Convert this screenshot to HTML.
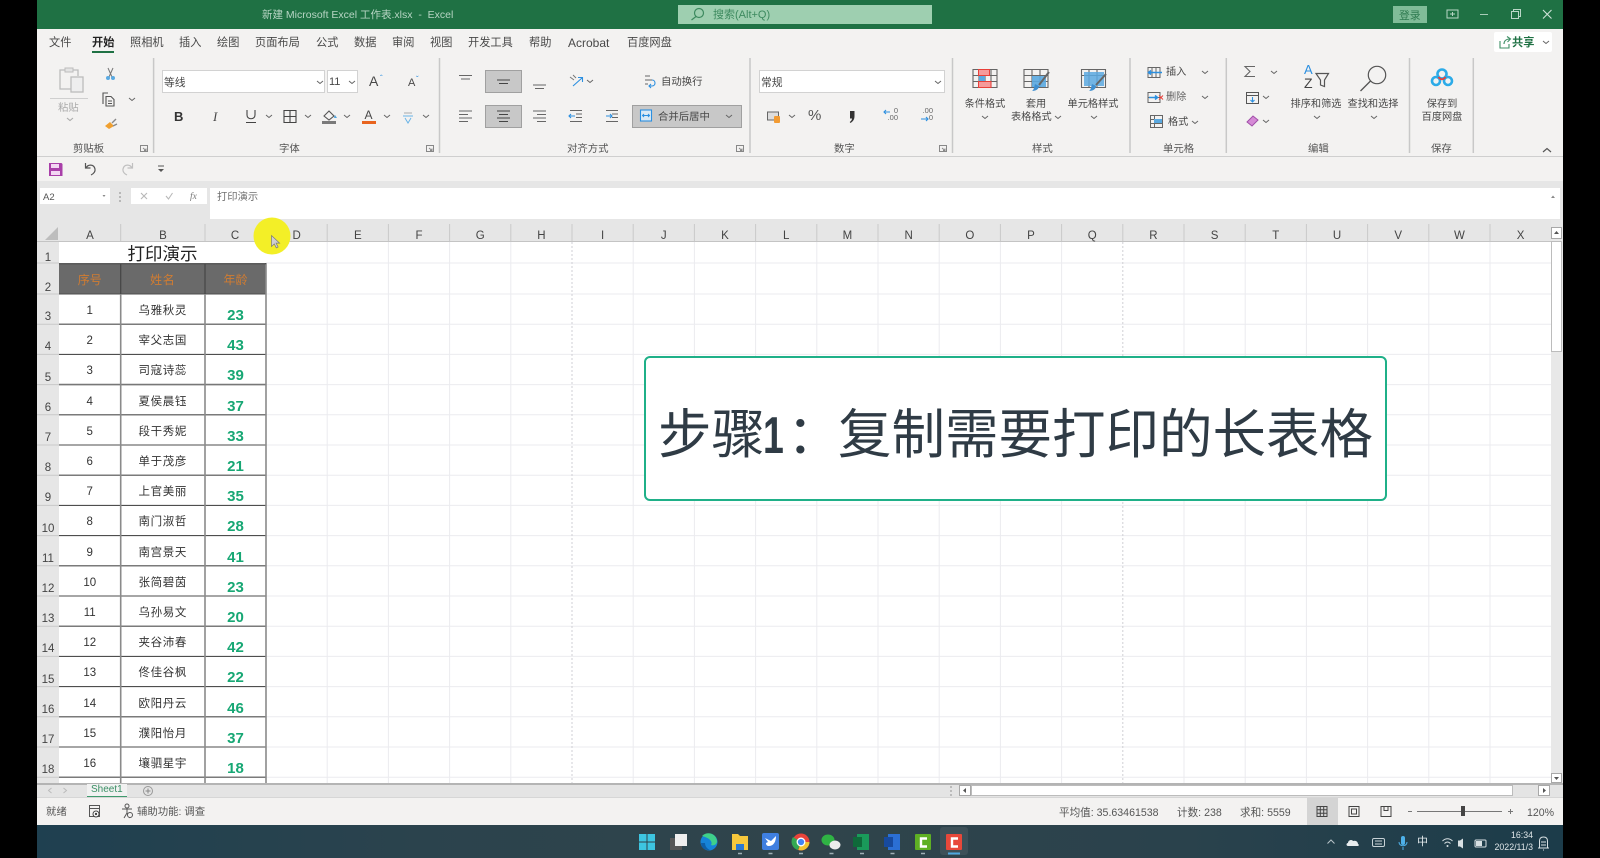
<!DOCTYPE html>
<html lang="zh"><head><meta charset="utf-8"><title>Excel</title>
<style>
html,body{margin:0;padding:0;background:#000;width:1600px;height:858px;overflow:hidden}
body{position:relative;font-family:"Liberation Sans","Noto Sans CJK SC",sans-serif;color:#444;filter:blur(.3px)}
.p{position:absolute}
.t{position:absolute;white-space:nowrap;font-size:11px;line-height:14px;color:#484848}
.c{text-align:center}
.m{font-size:11.2px;top:36px}
.g{font-size:10.4px;top:142.5px;color:#555}
.s{font-size:10.2px}
.h{position:absolute;top:229px;width:30px;text-align:center;font-size:11.5px;line-height:14px;color:#444}
.r{position:absolute;left:37px;width:229px;height:30.2px}
.r span{position:absolute;text-align:center;line-height:16px;white-space:nowrap}
.n{left:0;width:22px;bottom:-1px;font-size:11.5px;color:#444}
.a{left:22px;width:61.5px;top:9px;font-size:11.5px;color:#333}
.b{left:83.5px;width:84.5px;top:9px;font-size:11.5px;color:#333;letter-spacing:.6px}
.d{left:168px;width:61px;top:14px;font-size:15px;font-weight:bold;color:#17a774}
.q{position:absolute;white-space:nowrap;font-size:53.5px;line-height:60px;top:406px;color:#2f3b45}
.o{font-size:12px!important;color:#d07c32!important;top:8px!important}
</style></head><body>

<div class="p" style="left:37px;top:0;width:1526px;height:29px;background:#1f7144"></div>
<div class="p" style="left:37px;top:29px;width:1526px;height:127px;background:#f3f2f1"></div>
<div class="p" style="left:37px;top:156px;width:1526px;height:1.5px;background:#cfcfcf"></div>
<div class="p" style="left:37px;top:157px;width:1526px;height:24px;background:#f3f2f1"></div>
<div class="p" style="left:37px;top:181px;width:1526px;height:39px;background:#e6e6e6"></div>
<div class="p" style="left:37px;top:220px;width:1526px;height:22px;background:#e6e6e6"></div>
<div class="p" style="left:37px;top:242px;width:22px;height:541px;background:#e6e6e6"></div>
<div class="p" style="left:59px;top:242px;width:1492px;height:541px;background:#fff"></div>
<div class="p" style="left:1551px;top:220px;width:12px;height:563px;background:#e8e8e8"></div>
<div class="p" style="left:37px;top:783px;width:1526px;height:15px;background:#e4e4e4"></div>
<div class="p" style="left:37px;top:783px;width:1526px;height:1.5px;background:#b4b4b4"></div>
<div class="p" style="left:37px;top:796.5px;width:1526px;height:1.5px;background:#d6d6d6"></div>
<div class="p" style="left:37px;top:798px;width:1526px;height:27px;background:#f3f2f1"></div>
<div class="p" style="left:37px;top:825px;width:1526px;height:33px;background:linear-gradient(90deg,#1f4050 0%,#2b434d 25%,#30444b 50%,#2a424c 75%,#1c3c4a 100%)"></div>

<!-- boxes -->
<div class="p" style="left:678px;top:5px;width:254px;height:19px;background:#9ecfb0"></div>
<div class="p" style="left:1393px;top:6px;width:34px;height:17px;background:#80bc98"></div>
<div class="p" style="left:92px;top:51px;width:22px;height:2px;background:#1f7144"></div>
<div class="p" style="left:1494px;top:32px;width:58px;height:20px;background:#fff;border-radius:2px"></div>
<div class="p" style="left:162px;top:70px;width:161px;height:21px;background:#fff;border:1px solid #d2d2d2"></div>
<div class="p" style="left:327px;top:70px;width:29px;height:21px;background:#fff;border:1px solid #d2d2d2"></div>
<div class="p" style="left:485px;top:70px;width:35px;height:21px;background:#c8c8c8;border:1px solid #a0a0a0"></div>
<div class="p" style="left:485px;top:105px;width:35px;height:21px;background:#c8c8c8;border:1px solid #a0a0a0"></div>
<div class="p" style="left:632px;top:105px;width:108px;height:21px;background:#c8c8c8;border:1px solid #a0a0a0"></div>
<div class="p" style="left:759px;top:70px;width:184px;height:21px;background:#fff;border:1px solid #d2d2d2"></div>
<div class="p" style="left:40px;top:188px;width:70px;height:16px;background:#fff"></div>
<div class="p" style="left:131px;top:188px;width:76px;height:16px;background:#fff"></div>
<div class="p" style="left:209.5px;top:188px;width:1350px;height:31px;background:#fff"></div>
<div class="p" style="left:59px;top:264px;width:207px;height:30px;background:#6a6a6a"></div>
<div class="p" style="left:87px;top:784px;width:40px;height:13px;background:#f1f1f1;border-bottom:1px solid #3f9a6d;box-sizing:border-box"></div>
<div class="p" style="left:959px;top:785px;width:12px;height:11px;background:#fff;border:1px solid #a8a8a8;box-sizing:border-box"></div>
<div class="p" style="left:971px;top:785px;width:542px;height:11px;background:#fff;border:1px solid #bcbcbc;box-sizing:border-box"></div>
<div class="p" style="left:1538px;top:785px;width:12px;height:11px;background:#fff;border:1px solid #a8a8a8;box-sizing:border-box"></div>
<div class="p" style="left:1551px;top:227px;width:11px;height:12px;background:#fff;border:1px solid #a8a8a8;box-sizing:border-box"></div>
<div class="p" style="left:1551px;top:241px;width:11px;height:111px;background:#fff;border:1px solid #bcbcbc;box-sizing:border-box"></div>
<div class="p" style="left:1551px;top:773px;width:11px;height:10px;background:#fff;border:1px solid #a8a8a8;box-sizing:border-box"></div>
<div class="p" style="left:1307px;top:798px;width:31px;height:27px;background:#d4d4d4"></div>
<div class="p" style="left:940px;top:827px;width:28px;height:28px;background:#3d5058;border-radius:3px"></div>

<svg class="p" style="left:0;top:0" width="1600" height="858" viewBox="0 0 1600 858" fill="none">
<!-- gridlines -->
<path stroke="#ebebef" d="M266 263H1551M266 294H1551M266 324.2H1551M266 354.4H1551M266 384.6H1551M266 414.8H1551M266 445H1551M266 475.2H1551M266 505.4H1551M266 535.6H1551M266 565.8H1551M266 596H1551M266 626.2H1551M266 656.4H1551M266 686.6H1551M266 716.8H1551M266 747H1551M266 777.2H1551"/>
<path stroke="#ebebef" d="M327.2 242V783M388.4 242V783M449.6 242V783M510.8 242V783M633.2 242V783M694.4 242V783M755.6 242V783M816.8 242V783M878 242V783M939.2 242V783M1000.4 242V783M1061.6 242V783M1184 242V783M1245.2 242V783M1306.4 242V783M1367.6 242V783M1428.8 242V783M1490 242V783"/>
<path stroke="#cfcfd4" stroke-dasharray="2 2" d="M572 242V783M1122.8 242V783"/>
<!-- header separators -->
<path stroke="#c9c9c9" d="M120.7 224V242M205 224V242M266 224V242M327.2 224V242M388.4 224V242M449.6 224V242M510.8 224V242M572 224V242M633.2 224V242M694.4 224V242M755.6 224V242M816.8 224V242M878 224V242M939.2 224V242M1000.4 224V242M1061.6 224V242M1122.8 224V242M1184 224V242M1245.2 224V242M1306.4 224V242M1367.6 224V242M1428.8 224V242M1490 224V242"/>
<path stroke="#c9c9c9" d="M37 263H59M37 294H59M37 324.2H59M37 354.4H59M37 384.6H59M37 414.8H59M37 445H59M37 475.2H59M37 505.4H59M37 535.6H59M37 565.8H59M37 596H59M37 626.2H59M37 656.4H59M37 686.6H59M37 716.8H59M37 747H59M37 777.2H59"/>
<path stroke="#c4c4c4" d="M37 241.5H1551"/>
<path fill="#bdbdbd" d="M45 240L58 240L58 227Z"/>
<!-- table -->
<path stroke="#4e4e4e" stroke-width="1.1" d="M59 294H266M59 324.2H266M59 354.4H266M59 414.8H266M59 445H266M59 475.2H266M59 505.4H266M59 535.6H266M59 565.8H266M59 596H266M59 626.2H266M59 656.4H266M59 686.6H266M59 716.8H266M59 747H266M59 777.2H266"/>
<path stroke="#777" stroke-width="1.6" d="M59 384.6H266"/>
<path stroke="#8a8a8a" stroke-width="1.6" d="M120.7 294V783M205 294V783M266 263V783"/>
<path stroke="#454545" stroke-width="1.2" d="M120.7 264V294M205 264V294M59 263.7H266"/>
<!-- ribbon dividers -->
<path stroke="#c8c8c8" stroke-width="1.5" d="M153.6 58V153M439.5 58V153M750 58V153M952.5 58V153M1130 58V153M1226.3 58V153M1409.5 58V153M1473.3 58V153"/>
<!-- chevrons -->
<path stroke="#666" stroke-width="1" d="M129 98l3 2.5l3-2.5M317 81l3 2.5l3-2.5M349 81l3 2.5l3-2.5M266 115l3 2.5l3-2.5M305 115l3 2.5l3-2.5M344 115l3 2.5l3-2.5M384 115l3 2.5l3-2.5M423 115l3 2.5l3-2.5M587 80l3 2.5l3-2.5M726 115l3 2.5l3-2.5M935 81l3 2.5l3-2.5M789 115l3 2.5l3-2.5M982 116l3 2.5l3-2.5M1055 116l3 2.5l3-2.5M1091 116l3 2.5l3-2.5M1202 71l3 2.5l3-2.5M1202 96l3 2.5l3-2.5M1192 121l3 2.5l3-2.5M1271 71l3 2.5l3-2.5M1263 96l3 2.5l3-2.5M1263 120l3 2.5l3-2.5M1314 116l3 2.5l3-2.5M1371 116l3 2.5l3-2.5M1543 41l3 2.5l3-2.5"/>
<path stroke="#aaa" stroke-width="1.1" d="M67 118l3 2.5l3-2.5"/>
<path stroke="#555" stroke-width="1.2" d="M1543 152l4-3.5l4 3.5"/>
<!-- titlebar icons -->
<circle cx="699" cy="13" r="4.5" stroke="#3d8a5f" stroke-width="1.2"/><path stroke="#3d8a5f" stroke-width="1.2" d="M696 16.5L691.5 20"/>
<rect x="1447" y="10" width="11" height="8" stroke="#b9d6c6"/><path stroke="#b9d6c6" d="M1450 14H1455M1452.5 12V16"/>
<path stroke="#a9ccb8" d="M1480 14.5H1488"/>
<path stroke="#b9d6c6" d="M1511.5 11.5h7v7h-7zM1513.5 11.5v-2h7v7h-2"/>
<path stroke="#cfe3d8" stroke-width="1.1" d="M1543 10l8.500 8.500M1551.500 10l-8.500 8.500"/>
<!-- share -->
<path stroke="#3f8f66" stroke-width="1.1" d="M1500 41v7h9v-4M1504 44c0-3 2-5 6-5M1507 36.500l3.500 2.500l-3 3"/>
<!-- paste -->
<path stroke="#bcbcbc" stroke-width="1.3" d="M71 89H60V70H65M73 70H78V76"/>
<path fill="#e4e4e4" stroke="#bcbcbc" d="M65 68h8v4h-8z"/>
<rect x="71" y="77" width="12" height="15" fill="#eee" stroke="#bcbcbc" stroke-width="1.3"/>
<path stroke="#cfcfcf" d="M50 98.500H88"/>
<!-- cut -->
<path stroke="#777" stroke-width="1" d="M108 68L112 77M113 68L109 77"/>
<circle cx="108" cy="78" r="2" fill="#5aaae2"/><circle cx="113" cy="78" r="2" fill="#5aaae2"/>
<!-- copy -->
<path stroke="#555" stroke-width="1.1" d="M103 104V93H108M106 96.500h5l3 3V106h-8zM108 101h4M108 103.500h4"/>
<!-- painter -->
<path fill="#f0a030" d="M105 126l5-4l4 4l-5 3z"/><path stroke="#888" stroke-width="1.4" d="M112 123l4-4M113 126l4-2"/>
<!-- launcher -->
<path stroke="#888" d="M140.500 145.500h7v6h-7zM143 148l3 2.500M146 148.500v2h-2M426.500 145.500h7v6h-7zM429 148l3 2.500M432 148.500v2h-2M736.500 145.500h7v6h-7zM739 148l3 2.500M742 148.500v2h-2M939.500 145.500h7v6h-7zM942 148l3 2.500M945 148.500v2h-2"/>
<!-- underline / borders -->
<path stroke="#444" stroke-width="1.1" d="M247 110v5c0 5 8 5 8 0v-5M246 122.500H256"/>
<path stroke="#444" stroke-width="1.1" d="M284 110.500h12v12h-12zM290 110.500v12M284 116.500h12"/>
<!-- fill -->
<path stroke="#555" stroke-width="1.100" d="M324 116l5-5l5 5l-5 4z"/><path fill="#7a7a7a" d="M322 121h14v3h-14z"/><path fill="#4ea4e0" d="M335 115l2 3h-3z"/>
<!-- font colour bar -->
<path fill="#e8641e" d="M362 121h14v3h-14z"/>
<!-- wen -->
<path stroke="#6ab4e6" stroke-width="1" d="M403 116h10M405 118l3 5l3-5"/>
<path stroke="#aaa" d="M404 113h8"/>
<!-- align icons -->
<path stroke="#666" stroke-width="1" d="M459 75.500H472M461 79H470"/>
<path stroke="#444" stroke-width="1" d="M497 80H510M499 83.500H508"/>
<path stroke="#666" stroke-width="1" d="M533 85H546M535 88.500H544"/>
<path stroke="#666" stroke-width="1" d="M459 111H472M459 114.500H468M459 118H472M459 121.500H468"/>
<path stroke="#444" stroke-width="1" d="M497 111H510M499 114.500H508M497 118H510M499 121.500H508"/>
<path stroke="#666" stroke-width="1" d="M533 111H546M537 114.500H546M533 118H546M537 121.500H546"/>
<path stroke="#666" stroke-width="1" d="M570 110.500H582M576 114H582M576 117.500H582M570 121.500H582"/>
<path stroke="#2b8fe0" stroke-width="1.100" d="M569 116h6M571 114l-2 2l2 2"/>
<path stroke="#666" stroke-width="1" d="M606 110.500H618M612 114H618M612 117.500H618M606 121.500H618"/>
<path stroke="#2b8fe0" stroke-width="1.100" d="M606 116h6M610 114l2 2l-2 2"/>
<!-- orientation -->
<path stroke="#2b8fe0" stroke-width="1.100" d="M573 86l9-8M578 77.500h4.500v4.500"/><path stroke="#777" d="M570 77l4 3M573 75l3 3"/>
<!-- wrap -->
<path stroke="#666" d="M645 76h5M645 80h7M645 84h3"/><path stroke="#2b8fe0" stroke-width="1.100" d="M652 80c4 0 4 6 0 6h-3M651 84l-2 2l2 2"/>
<!-- merge -->
<rect x="640.500" y="110" width="11" height="11" stroke="#2b8fe0" stroke-width="1.100" fill="#dbeaf5"/><path stroke="#2b8fe0" d="M643 115.500h6M644 114l-1.500 1.500l1.500 1.500M648 114l1.500 1.500l-1.500 1.500"/>
<!-- accounting -->
<rect x="767.500" y="112" width="11" height="8" fill="#ddd" stroke="#666"/><rect x="774" y="116" width="6" height="7" fill="#f29b33" rx="1"/>
<!-- percent style decimal -->
<path fill="#333" d="M850 111h4.500v5c0 3-1 5-4 7l-.8-1c1.500-1 2.300-2.200 2.300-3.500h-2z"/>
<path stroke="#2b8fe0" stroke-width="1.100" d="M884 112h6M886 110l-2 2l2 2M921 119h7M926 117l2 2l-2 2"/>
<!-- cond format -->
<path stroke="#666" stroke-width="1.100" d="M973 69.500h24v18h-24zM973 75.500h24M973 81.500h24M979 69.500v18M985 69.500v18M991 69.500v18"/>
<path fill="#f69a9a" stroke="#e8403a" d="M978.500 69.500h11v6h-11zM978.500 81.500h12.500v6h-12.500z"/><path fill="#5aa9e0" d="M979 76h6v5h-6z"/>
<!-- table format -->
<path stroke="#666" stroke-width="1.100" d="M1024 69.500h24v18h-24zM1024 75.500h24M1024 81.500h24M1032 69.500v18M1040 69.500v18"/>
<path fill="#5aa9e0" d="M1032 76h14v11h-14z" opacity=".9"/>
<path stroke="#666" stroke-width="2" d="M1049 72L1039 85"/><path fill="#3f8fd0" d="M1035 84l4 2c0 3-3 5-7 5c2-1 2-4 3-7z"/>
<!-- cell style -->
<path stroke="#666" stroke-width="1.100" d="M1081.500 69.500h24v18h-24zM1081.500 75.500h24M1089 69.500v18M1097 69.500v18"/>
<path fill="#5aa9e0" d="M1084 72h20v14h-20z" opacity=".85"/>
<path stroke="#666" stroke-width="2" d="M1106 74L1096 85"/><path fill="#3f8fd0" d="M1092 84l4 2c0 3-3 5-7 5c2-1 2-4 3-7z"/>
<!-- cells -->
<path stroke="#666" d="M1148 67.500h12v10h-12zM1148 72.500h12M1152 67.500v10M1156 67.500v10"/><path stroke="#2b8fe0" stroke-width="1.500" d="M1148 72.500h14M1151 70.500l-2.500 2l2.500 2"/>
<path stroke="#666" d="M1148 92.500h12v10h-12zM1148 97.500h12"/><path stroke="#2b8fe0" stroke-width="1.500" d="M1149 97.500h9M1155 95.500l2.500 2l-2.500 2"/><path stroke="#e8403a" d="M1159 95.500l4 4M1163 95.500l-4 4"/>
<path stroke="#666" d="M1150.500 115.500h12v12h-12zM1150.500 119.500h12M1150.500 123.500h12M1154.500 115.500v12"/><path fill="#5aa9e0" d="M1154 119h8v4h-8z"/>
<!-- edit -->
<path stroke="#666" stroke-width="1.100" d="M1255 66.500h-10l5 5l-5 5h10"/>
<path stroke="#555" stroke-width="1" d="M1246.500 92.500h12v11h-12zM1246.500 95.500h12"/><path stroke="#2b8fe0" stroke-width="1.100" d="M1252.500 97v5M1250.500 100l2 2l2-2"/>
<path fill="#d58ad6" stroke="#a04ea8" d="M1247 122l6-6l5 4l-6 6z"/>
<!-- sort -->
<path stroke="#555" stroke-width="1.200" d="M1316 73.500H1328.500L1324.500 80V86.500L1320.500 85V80Z"/>
<!-- find -->
<circle cx="1377" cy="75" r="8.700" stroke="#555" stroke-width="1.200"/><path stroke="#555" stroke-width="1.300" d="M1370.500 81L1360.500 91"/>
<!-- baidu -->
<circle cx="1442" cy="74" r="4.500" stroke="#2cabe8" stroke-width="2.600"/><circle cx="1436" cy="81" r="4" stroke="#2cabe8" stroke-width="2.600"/><circle cx="1448" cy="81" r="4" stroke="#2cabe8" stroke-width="2.600"/>
<path stroke="#e8403a" stroke-width="2" d="M1438.500 77c2 3 5 3 7 0"/>
<!-- qat -->
<path fill="#a93fa9" d="M49 163h12.500l1 1V176h-13.500z"/><path fill="#f3d6f3" d="M51 164h8v4h-8zM51 171h9v4h-9z"/>
<path stroke="#555" stroke-width="1.200" d="M85.500 163v5h5M86 168c2-4 8-4 9 1c.5 3-2 5-4 6"/>
<path stroke="#c0c0c0" stroke-width="1.200" d="M132.500 163v5h-5M132 168c-2-4-8-4-9 1c-.5 3 2 5 4 6"/>
<path stroke="#555" d="M158 166h6"/><path fill="#555" d="M158 169h6l-3 3z"/>
<!-- formula -->
<path fill="#888" d="M102.500 195h3l-1.500 2z"/>
<path fill="#b8b8b8" d="M119 192h2v2h-2zM119 196h2v2h-2zM119 200h2v2h-2z"/>
<path stroke="#b8b8b8" stroke-width="1.100" d="M141 193l6 6M147 193l-6 6M166 196l2.500 3l4-6"/>
<path fill="#8a8a8a" d="M1551 198l2-2.500l2 2.500z"/>
<!-- scroll arrows -->
<path fill="#555" d="M1556.500 231l2.500 3h-5zM1556.500 780l2.500-3h-5zM963 790.500l3-2.500v5zM1546 790.500l-3-2.500v5z"/>
<path stroke="#bbb" d="M51.500 788l-3 2.500l3 2.500M63.500 788l3 2.500l-3 2.500"/>
<circle cx="148" cy="791" r="4.500" stroke="#999"/><path stroke="#888" d="M145.500 791h5M148 788.500v5"/>
<path fill="#bbb" d="M950 786h2v2h-2zM950 790h2v2h-2zM950 794h2v2h-2z"/>
<!-- status icons -->
<path stroke="#555" d="M89.500 805.500h10v11h-10zM89.500 808.500h10"/><circle cx="96" cy="814" r="3" fill="#fff" stroke="#444"/><circle cx="96" cy="814" r="1.200" fill="#444"/>
<circle cx="127" cy="806" r="2" stroke="#555"/><path stroke="#555" d="M122 809h10M127 809v4l-3 5M127 813l3 5"/><circle cx="130" cy="815" r="2.500" stroke="#555" fill="#f3f2f1"/>
<!-- view buttons -->
<path stroke="#444" d="M1317 806.500h10v10h-10zM1317 809.800h10M1317 813.200h10M1320.300 806.500v10M1323.700 806.500v10"/>
<path stroke="#444" d="M1349 806.500h10v10h-10zM1351.500 809h5v5h-5z"/>
<path stroke="#444" d="M1381 806.500h10v10h-10zM1384 806.500v4h4v-4"/>
<path stroke="#777" d="M1408 811.500h4M1417 811.500H1502M1508 811.500h5M1510.500 809v5"/>
<rect x="1461" y="806" width="4" height="10" fill="#444"/>
<!-- taskbar -->
<path fill="#3dc5e0" d="M639 834h7.500v7.500H639zM647.500 834H655v7.500h-7.500zM639 842.500h7.500V850H639zM647.500 842.500H655V850h-7.500z"/>
<path fill="#555" d="M670 838h12v12h-12z"/><path fill="#eee" d="M675 834h12v12h-12z"/>
<circle cx="709" cy="842" r="8.500" fill="#1683d8"/><path fill="#3fd08a" d="M702 836c5-5 14-3 15 5c0 4-4 5-6 4c2-3-1-7-9-9z"/><path fill="#0e5fa8" d="M701 843c0 5 5 8 9 7c-3-1-5-4-5-7z"/>
<path fill="#f7c83c" d="M732 834h6l2 2h8v14h-16z"/><path fill="#2b79d4" d="M736 844h8v6h-8z"/>
<rect x="762" y="833" width="17" height="17" rx="2" fill="#3f7fe0"/><path fill="#fff" d="M765 838l6 3l5-5c0 5-2 10-7 10c-2 0-3-1-3-3l2-1z"/>
<circle cx="801" cy="842" r="8.500" fill="#e8433a"/><path fill="#f4c430" d="M801 842l8.500 0a8.500 8.500 0 0 1-11 8z"/><path fill="#34a853" d="M801 842l-3 8a8.500 8.500 0 0 1-5-13z"/><circle cx="801" cy="842" r="3.800" fill="#4285f4" stroke="#fff" stroke-width="1.300"/>
<ellipse cx="828" cy="840" rx="6.500" ry="5.500" fill="#2fb344"/><ellipse cx="835" cy="845" rx="5.500" ry="4.500" fill="#ececec"/>
<path fill="#1a9a5a" d="M857 834h12v16h-12z"/><path fill="#0f6a3a" d="M853 837h9v10h-9z"/>
<path fill="#2b6fd4" d="M888 834h12v16h-12z"/><path fill="#174a9e" d="M884 837h9v10h-9z"/>
<rect x="915" y="834" width="16" height="16" rx="1" fill="#5eb024"/><path stroke="#fff" stroke-width="2.400" d="M927 838.500h-6v8h6"/>
<rect x="946" y="834" width="16" height="16" rx="1" fill="#e8483a"/><path stroke="#fff" stroke-width="2.400" d="M958 838.500h-6v8h6"/>
<path stroke="#9fb0b6" stroke-width="1.600" d="M738 853.500h4M768.500 853.500h4M799 853.500h4M829.500 853.500h4M860 853.500h4M890.500 853.500h4M921 853.500h4"/>
<path stroke="#4ea8e0" stroke-width="2" d="M948 853.500h12"/>
<!-- tray -->
<path stroke="#b8c4c8" d="M1327.500 843.500l3.500-3.500l3.500 3.500"/>
<path fill="#e8ecee" d="M1348 846c-2 0-2-3 0-3c0-3 4-4 5-2c3-1 5 1 5 3c1 0 1 2 0 2z"/>
<rect x="1372.500" y="838.500" width="12" height="8" rx="1.500" stroke="#c8d2d6"/><path stroke="#c8d2d6" d="M1375 841h7M1375 844h7"/>
<rect x="1401" y="836" width="4" height="9" rx="2" fill="#4eb0e8"/><path stroke="#4eb0e8" d="M1399 842c0 5 8 5 8 0M1403 847v3"/>
<path stroke="#d8e0e3" d="M1442.500 841c3-3 7-3 10 0M1444.500 843.500c2-2 4-2 6 0"/><circle cx="1447.500" cy="846" r="1" fill="#d8e0e3"/>
<path fill="#d8e0e3" d="M1458 840.500h2l3-2v10l-3-2h-2z"/>
<rect x="1475" y="840" width="11" height="7" rx="1" stroke="#d8e0e3"/><path fill="#d8e0e3" d="M1476 841h6v5h-6z"/>
<path stroke="#d8e0e3" d="M1539.500 848v-7c0-3 2-4 4-4s4 1 4 4v7zM1538 848h11M1543 850h1M1541 842h5M1541 845h5"/>
<!-- cursor highlight -->
<circle cx="272" cy="236" r="18.500" fill="#f3ef27"/>
<path fill="#cfcfd2" stroke="#777" stroke-width=".7" d="M271.500 235.500v11l2.800-2.600l2 4l1.800-.9l-2-3.900h3.500z"/>
</svg>

<!-- title text -->
<div class="t" style="left:262px;top:8px;color:#b7d5c4;font-size:10.5px">新建 Microsoft Excel 工作表.xlsx&nbsp; -&nbsp; Excel</div>
<div class="t" style="left:713px;top:8px;color:#3d8a5f;font-size:11px">搜索(Alt+Q)</div>
<div class="t" style="left:1399px;top:9px;color:#2f7a50;font-size:10.8px">登录</div>

<!-- tabs -->
<div class="t m" style="left:49px">文件</div>
<div class="t m" style="left:92px;font-weight:bold;color:#222">开始</div>
<div class="t m" style="left:130px">照相机</div>
<div class="t m" style="left:179px">插入</div>
<div class="t m" style="left:217px">绘图</div>
<div class="t m" style="left:255px">页面布局</div>
<div class="t m" style="left:316px">公式</div>
<div class="t m" style="left:354px">数据</div>
<div class="t m" style="left:392px">审阅</div>
<div class="t m" style="left:430px">视图</div>
<div class="t m" style="left:468px">开发工具</div>
<div class="t m" style="left:529px">帮助</div>
<div class="t m" style="left:568px;font-size:12px">Acrobat</div>
<div class="t m" style="left:627px">百度网盘</div>
<div class="t m" style="left:1512px;font-weight:bold;color:#1f7144">共享</div>

<!-- clipboard -->
<div class="t" style="left:58px;top:102px;color:#ababab;font-size:10.4px">粘贴</div>
<div class="t g" style="left:73px">剪贴板</div>
<!-- font -->
<div class="t" style="left:164px;top:76px;font-size:10.8px">等线</div>
<div class="t" style="left:329px;top:75px;font-size:11px">11</div>
<div class="t" style="left:369px;top:74px;font-size:14px">A</div>
<div class="t" style="left:380px;top:72px;font-size:8px;color:#2b8fe0">ˆ</div>
<div class="t" style="left:408px;top:76px;font-size:11px">A</div>
<div class="t" style="left:416px;top:73px;font-size:8px;color:#2b8fe0">ˇ</div>
<div class="t" style="left:174px;top:110px;font-size:13px;font-weight:bold;color:#333">B</div>
<div class="t" style="left:213px;top:110px;font-size:13px;font-style:italic;font-family:'Liberation Serif',serif">I</div>
<div class="t" style="left:364.500px;top:108px;font-size:12px">A</div>
<div class="t g" style="left:279px">字体</div>
<!-- align -->
<div class="t" style="left:661px;top:76px;font-size:10.4px">自动换行</div>
<div class="t" style="left:658px;top:111px;font-size:10.4px">合并后居中</div>
<div class="t g" style="left:567px">对齐方式</div>
<!-- number -->
<div class="t" style="left:761px;top:76px;font-size:10.8px">常规</div>
<div class="t" style="left:808px;top:109px;font-size:15px;color:#555">%</div>
<div class="t" style="left:885px;top:107px;font-size:7.500px;line-height:7px;color:#666;text-align:right;width:13px">0<br>.00</div>
<div class="t" style="left:920px;top:107px;font-size:7.500px;line-height:7px;color:#666;text-align:right;width:13px">.00<br>0</div>
<div class="t g" style="left:834px">数字</div>
<!-- styles -->
<div class="t s c" style="left:960px;width:50px;top:98px">条件格式</div>
<div class="t s c" style="left:1011px;width:50px;top:98px">套用</div>
<div class="t s" style="left:1011px;top:111px">表格格式</div>
<div class="t s c" style="left:1063px;width:60px;top:98px">单元格样式</div>
<div class="t g" style="left:1032px">样式</div>
<!-- cells -->
<div class="t s" style="left:1166px;top:66px">插入</div>
<div class="t s" style="left:1166px;top:91px;color:#666">删除</div>
<div class="t s" style="left:1168px;top:116px">格式</div>
<div class="t g" style="left:1163px">单元格</div>
<!-- edit -->
<div class="t" style="left:1304px;top:63px;font-size:13px;color:#2b8fe0;line-height:13px">A</div>
<div class="t" style="left:1304px;top:76px;font-size:14px;color:#444;line-height:14px">Z</div>
<div class="t s c" style="left:1285px;width:62px;top:98px">排序和筛选</div>
<div class="t s c" style="left:1343px;width:60px;top:98px">查找和选择</div>
<div class="t g" style="left:1308px">编辑</div>
<!-- save -->
<div class="t s c" style="left:1412px;width:60px;top:98px">保存到</div>
<div class="t s c" style="left:1412px;width:60px;top:111px">百度网盘</div>
<div class="t g" style="left:1431px">保存</div>

<!-- formula -->
<div class="t" style="left:43px;top:191px;font-size:9.500px;color:#555">A2</div>
<div class="t" style="left:190px;top:190px;font-size:9.500px;font-style:italic;font-family:'Liberation Serif',serif;color:#777">fx</div>
<div class="t" style="left:217px;top:191px;font-size:10.300px;color:#707070">打印演示</div>

<!-- column heads -->
<div class="h" style="left:75px">A</div><div class="h" style="left:148px">B</div><div class="h" style="left:220px">C</div>
<div class="h" style="left:281.600px">D</div><div class="h" style="left:342.800px">E</div><div class="h" style="left:404px">F</div><div class="h" style="left:465.200px">G</div><div class="h" style="left:526.400px">H</div><div class="h" style="left:587.600px">I</div><div class="h" style="left:648.800px">J</div><div class="h" style="left:710px">K</div><div class="h" style="left:771.200px">L</div><div class="h" style="left:832.400px">M</div><div class="h" style="left:893.600px">N</div><div class="h" style="left:954.800px">O</div><div class="h" style="left:1016px">P</div><div class="h" style="left:1077.200px">Q</div><div class="h" style="left:1138.400px">R</div><div class="h" style="left:1199.600px">S</div><div class="h" style="left:1260.800px">T</div><div class="h" style="left:1322px">U</div><div class="h" style="left:1383.200px">V</div><div class="h" style="left:1444.400px">W</div><div class="h" style="left:1505.600px">X</div>

<!-- rows -->
<div class="t" style="left:59px;width:207px;text-align:center;top:243px;font-size:17.500px;line-height:22px;color:#222">打印演示</div>
<div class="r" style="top:232.800px"><span class="n" style="bottom:-3px">1</span></div>
<div class="r" style="top:263.800px"><span class="n" style="bottom:-2px">2</span>
<span class="a o">序号</span><span class="b o">姓名</span><span class="a o" style="left:168px;width:61px">年龄</span></div>
<div class="r" style="top:294px"><span class="n">3</span><span class="a">1</span><span class="b">乌雅秋灵</span><span class="d">23</span></div>
<div class="r" style="top:324.200px"><span class="n">4</span><span class="a">2</span><span class="b">宰父志国</span><span class="d">43</span></div>
<div class="r" style="top:354.400px"><span class="n">5</span><span class="a">3</span><span class="b">司寇诗蕊</span><span class="d">39</span></div>
<div class="r" style="top:384.600px"><span class="n">6</span><span class="a">4</span><span class="b">夏侯晨钰</span><span class="d">37</span></div>
<div class="r" style="top:414.800px"><span class="n">7</span><span class="a">5</span><span class="b">段干秀妮</span><span class="d">33</span></div>
<div class="r" style="top:445px"><span class="n">8</span><span class="a">6</span><span class="b">单于茂彦</span><span class="d">21</span></div>
<div class="r" style="top:475.200px"><span class="n">9</span><span class="a">7</span><span class="b">上官美丽</span><span class="d">35</span></div>
<div class="r" style="top:505.400px"><span class="n">10</span><span class="a">8</span><span class="b">南门淑哲</span><span class="d">28</span></div>
<div class="r" style="top:535.600px"><span class="n">11</span><span class="a">9</span><span class="b">南宫景天</span><span class="d">41</span></div>
<div class="r" style="top:565.800px"><span class="n">12</span><span class="a">10</span><span class="b">张简碧茵</span><span class="d">23</span></div>
<div class="r" style="top:596px"><span class="n">13</span><span class="a">11</span><span class="b">乌孙易文</span><span class="d">20</span></div>
<div class="r" style="top:626.200px"><span class="n">14</span><span class="a">12</span><span class="b">夹谷沛春</span><span class="d">42</span></div>
<div class="r" style="top:656.400px"><span class="n">15</span><span class="a">13</span><span class="b">佟佳谷枫</span><span class="d">22</span></div>
<div class="r" style="top:686.600px"><span class="n">16</span><span class="a">14</span><span class="b">欧阳丹云</span><span class="d">46</span></div>
<div class="r" style="top:716.800px"><span class="n">17</span><span class="a">15</span><span class="b">濮阳怡月</span><span class="d">37</span></div>
<div class="r" style="top:747px"><span class="n">18</span><span class="a">16</span><span class="b">壤驷星宇</span><span class="d">18</span></div>

<!-- callout -->
<div class="p" style="left:644px;top:356px;width:739px;height:141px;background:#fff;border:2px solid #1fb088;border-radius:6px"></div>
<div class="q" style="left:658px">步骤</div>
<div class="q" style="left:763px;font-weight:bold;font-size:52px;transform:scaleX(.72);transform-origin:left center">1</div>
<div class="q" style="left:787px">：</div>
<div class="q" style="left:838px">复制需要打印的长表格</div>

<!-- tab/status -->
<div class="t" style="left:91px;top:784px;font-size:10px;line-height:12px;color:#3a8f65">Sheet1</div>
<div class="t" style="left:46px;top:806px;font-size:10.400px;color:#555">就绪</div>
<div class="t" style="left:137px;top:806px;font-size:10.400px;color:#555">辅助功能: 调查</div>
<div class="t" style="left:1059px;top:806px;font-size:10.600px;color:#555">平均值: 35.63461538</div>
<div class="t" style="left:1177px;top:806px;font-size:10.600px;color:#555">计数: 238</div>
<div class="t" style="left:1240px;top:806px;font-size:10.600px;color:#555">求和: 5559</div>
<div class="t" style="left:1527px;top:806px;font-size:10.600px;color:#555">120%</div>

<!-- tray text -->
<div class="t" style="left:1417px;top:835px;font-size:11px;color:#e4eaec">中</div>
<div class="t" style="left:1490px;width:43px;text-align:right;top:829px;font-size:8.800px;line-height:12px;color:#dfe6e8">16:34</div>
<div class="t" style="left:1490px;width:43px;text-align:right;top:841px;font-size:8.800px;line-height:12px;color:#dfe6e8">2022/11/3</div>

</body></html>
